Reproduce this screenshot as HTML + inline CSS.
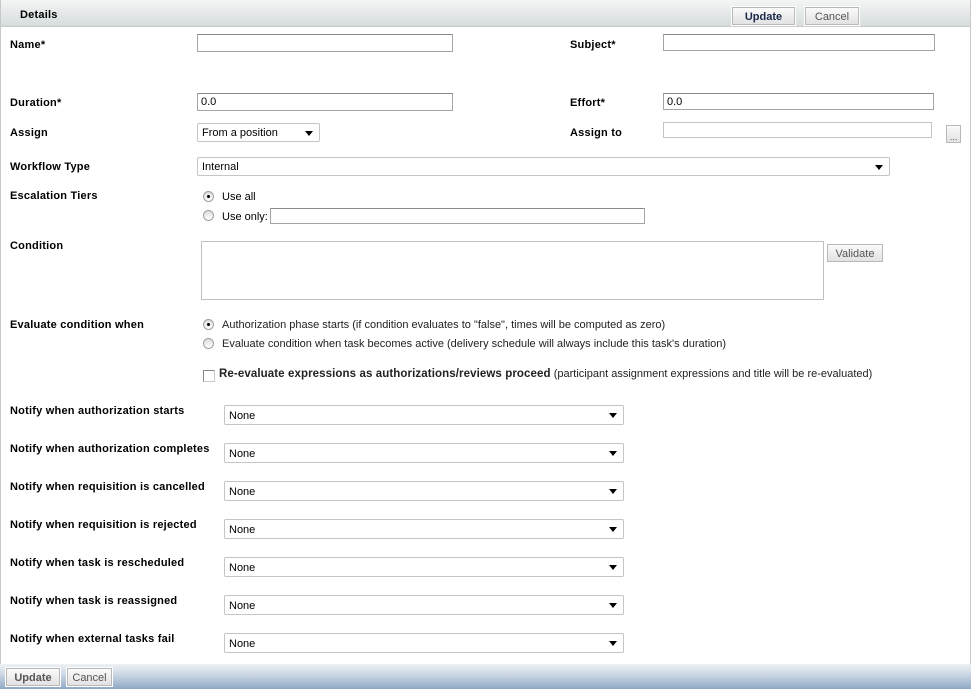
<!DOCTYPE html>
<html><head><style>
*{box-sizing:border-box;margin:0;padding:0}
body{width:971px;height:689px;background:#fff;font-family:"Liberation Sans",Arial,sans-serif;font-size:11px;color:#000;position:relative;overflow:hidden}
.a{position:absolute;white-space:nowrap}
.l{font-weight:bold;font-size:11px;line-height:13px;margin-top:1px;letter-spacing:0.22px}
.t{font-size:11px;line-height:13px;margin-top:1px}
.in{position:absolute;border:1px solid #a5a5a5;border-top-color:#8a8a8a;background:#fff;font-size:11px;padding:2px 3px;line-height:12px}
.sel{position:absolute;border:1px solid #c5c5c5;background:#fff;font-size:11px;padding:1px 4px 0;border-radius:2px}
.sel:after{content:"";position:absolute;right:6px;top:50%;margin-top:-2px;border-left:4px solid transparent;border-right:4px solid transparent;border-top:5px solid #000}
.btn{position:absolute;border:1px solid #b8b8b8;background:linear-gradient(#fafafa,#e2e2e2);font-size:11px;text-align:center;color:#555;outline:1px solid #fff;padding-top:1px}
.r{position:absolute;width:11px;height:11px;border-radius:50%;border:1px solid #a0a0a0;background:linear-gradient(#ddd,#fff)}
.r.on:after{content:"";position:absolute;left:3px;top:3px;width:3px;height:3px;border-radius:50%;background:#000}
</style></head><body>
<div class="a" style="left:0;top:0;width:971px;height:27px;background:linear-gradient(#f4f5f5,#d6dcdc);border-bottom:1px solid #c8cccc"></div>
<div class="a" style="left:0;top:0;width:1px;height:689px;background:#c8c8c8"></div>
<div class="a" style="right:0;top:0;width:1px;height:689px;background:#c8c8c8"></div>
<div class="a l" style="left:20px;top:8px">Details</div>
<div class="btn" style="left:732px;top:7px;width:63px;height:18px;line-height:16px;font-weight:bold;color:#1a2a4a">Update</div>
<div class="btn" style="left:805px;top:7px;width:54px;height:18px;line-height:16px">Cancel</div>

<div class="a l" style="left:10px;top:38px">Name*</div>
<div class="in" style="left:197px;top:34px;width:256px;height:18px"></div>
<div class="a l" style="left:570px;top:38px">Subject*</div>
<div class="in" style="left:663px;top:34px;width:272px;height:17px"></div>

<div class="a l" style="left:10px;top:96px">Duration*</div>
<div class="in" style="left:197px;top:93px;width:256px;height:18px">0.0</div>
<div class="a l" style="left:570px;top:96px">Effort*</div>
<div class="in" style="left:663px;top:93px;width:271px;height:17px">0.0</div>

<div class="a l" style="left:10px;top:126px">Assign</div>
<div class="sel" style="left:197px;top:123px;width:123px;height:19px;line-height:17px">From a position</div>
<div class="a l" style="left:570px;top:126px">Assign to</div>
<div class="in" style="left:663px;top:122px;width:269px;height:16px;border-color:#c5c5c5"></div>
<div class="btn" style="left:946px;top:125px;width:15px;height:18px;line-height:20px;font-size:9px">...</div>

<div class="a l" style="left:10px;top:160px">Workflow Type</div>
<div class="sel" style="left:197px;top:157px;width:693px;height:19px;line-height:17px">Internal</div>

<div class="a l" style="left:10px;top:189px">Escalation Tiers</div>
<div class="r on" style="left:203px;top:191px"></div>
<div class="a t" style="left:222px;top:190px">Use all</div>
<div class="r" style="left:203px;top:210px"></div>
<div class="a t" style="left:222px;top:210px">Use only:</div>
<div class="in" style="left:270px;top:208px;width:375px;height:16px"></div>

<div class="a l" style="left:10px;top:239px">Condition</div>
<div class="in" style="left:201px;top:241px;width:623px;height:59px;border-color:#c0c0c0"></div>
<div class="btn" style="left:827px;top:244px;width:56px;height:18px;line-height:16px">Validate</div>

<div class="a l" style="left:10px;top:318px">Evaluate condition when</div>
<div class="r on" style="left:203px;top:319px"></div>
<div class="a t" style="left:222px;top:318px;color:#222">Authorization phase starts (if condition evaluates to "false", times will be computed as zero)</div>
<div class="r" style="left:203px;top:338px"></div>
<div class="a t" style="left:222px;top:337px;color:#222">Evaluate condition when task becomes active (delivery schedule will always include this task's duration)</div>
<div class="a" style="left:203px;top:370px;width:12px;height:12px;border:1px solid #888;border-right-color:#ccc;border-bottom-color:#ccc"></div>
<div class="a t" style="left:219px;top:367px;color:#222"><b style="font-size:11.5px;letter-spacing:0.1px">Re-evaluate expressions as authorizations/reviews proceed</b> (participant assignment expressions and title will be re-evaluated)</div>

<div class="a l" style="left:10px;top:404px">Notify when authorization starts</div>
<div class="sel" style="left:224px;top:405px;width:400px;height:20px;line-height:18px">None</div>
<div class="a l" style="left:10px;top:442px">Notify when authorization completes</div>
<div class="sel" style="left:224px;top:443px;width:400px;height:20px;line-height:18px">None</div>
<div class="a l" style="left:10px;top:480px">Notify when requisition is cancelled</div>
<div class="sel" style="left:224px;top:481px;width:400px;height:20px;line-height:18px">None</div>
<div class="a l" style="left:10px;top:518px">Notify when requisition is rejected</div>
<div class="sel" style="left:224px;top:519px;width:400px;height:20px;line-height:18px">None</div>
<div class="a l" style="left:10px;top:556px">Notify when task is rescheduled</div>
<div class="sel" style="left:224px;top:557px;width:400px;height:20px;line-height:18px">None</div>
<div class="a l" style="left:10px;top:594px">Notify when task is reassigned</div>
<div class="sel" style="left:224px;top:595px;width:400px;height:20px;line-height:18px">None</div>
<div class="a l" style="left:10px;top:632px">Notify when external tasks fail</div>
<div class="sel" style="left:224px;top:633px;width:400px;height:20px;line-height:18px">None</div>

<div class="a" style="left:0;top:664px;width:971px;height:25px;background:linear-gradient(#eef1f4,#c9d5e2 45%,#8ea8c5)"></div>
<div class="btn" style="left:6px;top:668px;width:54px;height:18px;line-height:16px;font-weight:bold;color:#555">Update</div>
<div class="btn" style="left:67px;top:668px;width:45px;height:18px;line-height:16px">Cancel</div>
</body></html>
